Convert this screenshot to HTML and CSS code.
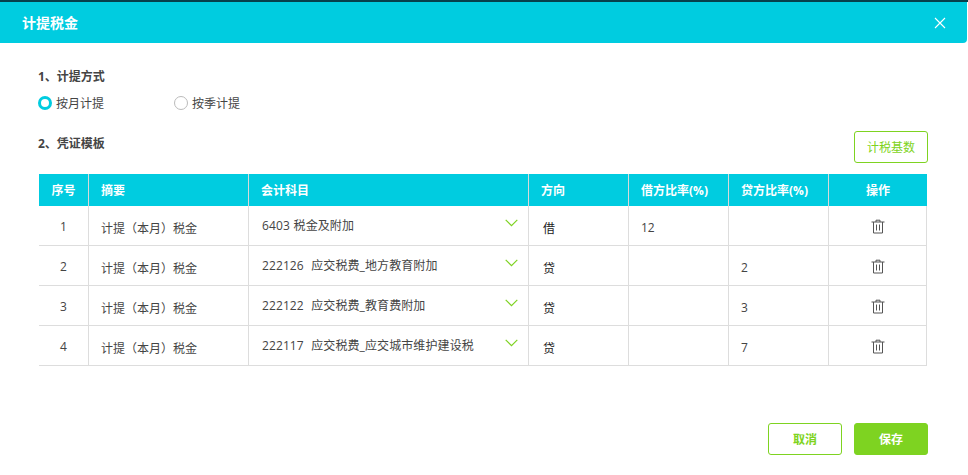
FILE: index.html
```html
<!DOCTYPE html>
<html lang="zh-CN">
<head>
<meta charset="utf-8">
<title>计提税金</title>
<link rel="stylesheet" href="styles.css">
</head>
<body>
<div class="dialog">
  <header class="head">
    <h1 class="head-title">计提税金</h1>
    <svg class="close" width="12" height="12" viewBox="0 0 12 12"><path d="M1 1l10 10M11 1L1 11" stroke="#fff" stroke-width="1.1" fill="none"/></svg>
  </header>
  <main class="body">
    <div class="sec-title">1、计提方式</div>
    <div class="radios">
      <label class="radio"><span class="dot dot-on"></span>按月计提</label>
      <label class="radio"><span class="dot"></span>按季计提</label>
    </div>
    <div class="sec-row">
      <div class="sec-title">2、凭证模板</div>
      <button class="btn btn-base">计税基数</button>
    </div>
    <table class="grid">
      <colgroup>
        <col class="c1"><col class="c2"><col class="c3"><col class="c4"><col class="c5"><col class="c6"><col class="c7">
      </colgroup>
      <thead>
        <tr><th class="ctr">序号</th><th>摘要</th><th>会计科目</th><th>方向</th><th>借方比率(%)</th><th>贷方比率(%)</th><th class="ctr">操作</th></tr>
      </thead>
      <tbody>
        <tr>
          <td class="ctr">1</td><td class="low">计提（本月）税金</td>
          <td class="acct"><span class="sel">6403 税金及附加</span><svg class="chev" width="13" height="8" viewBox="0 0 13 8"><path d="M.7.8l5.8 5.8L12.3.8" stroke="#7ed321" stroke-width="1.2" fill="none"/></svg></td>
          <td class="low dark">借</td><td class="low">12</td><td class="low"></td>
          <td class="ctr"><svg class="trash" width="14" height="15" viewBox="0 0 14 15"><path d="M.5 3h13M5 3V1.2h4V3M2.5 3v11h9V3M5.5 5.5v6M8.5 5.5v6" stroke="#555" fill="none"/></svg></td>
        </tr>
        <tr>
          <td class="ctr">2</td><td class="low">计提（本月）税金</td>
          <td class="acct"><span class="sel">222126&nbsp; 应交税费_地方教育附加</span><svg class="chev" width="13" height="8" viewBox="0 0 13 8"><path d="M.7.8l5.8 5.8L12.3.8" stroke="#7ed321" stroke-width="1.2" fill="none"/></svg></td>
          <td class="low dark">贷</td><td class="low"></td><td class="low">2</td>
          <td class="ctr"><svg class="trash" width="14" height="15" viewBox="0 0 14 15"><path d="M.5 3h13M5 3V1.2h4V3M2.5 3v11h9V3M5.5 5.5v6M8.5 5.5v6" stroke="#555" fill="none"/></svg></td>
        </tr>
        <tr>
          <td class="ctr">3</td><td class="low">计提（本月）税金</td>
          <td class="acct"><span class="sel">222122&nbsp; 应交税费_教育费附加</span><svg class="chev" width="13" height="8" viewBox="0 0 13 8"><path d="M.7.8l5.8 5.8L12.3.8" stroke="#7ed321" stroke-width="1.2" fill="none"/></svg></td>
          <td class="low dark">贷</td><td class="low"></td><td class="low">3</td>
          <td class="ctr"><svg class="trash" width="14" height="15" viewBox="0 0 14 15"><path d="M.5 3h13M5 3V1.2h4V3M2.5 3v11h9V3M5.5 5.5v6M8.5 5.5v6" stroke="#555" fill="none"/></svg></td>
        </tr>
        <tr>
          <td class="ctr">4</td><td class="low">计提（本月）税金</td>
          <td class="acct"><span class="sel">222117&nbsp; 应交税费_应交城市维护建设税</span><svg class="chev" width="13" height="8" viewBox="0 0 13 8"><path d="M.7.8l5.8 5.8L12.3.8" stroke="#7ed321" stroke-width="1.2" fill="none"/></svg></td>
          <td class="low dark">贷</td><td class="low"></td><td class="low">7</td>
          <td class="ctr"><svg class="trash" width="14" height="15" viewBox="0 0 14 15"><path d="M.5 3h13M5 3V1.2h4V3M2.5 3v11h9V3M5.5 5.5v6M8.5 5.5v6" stroke="#555" fill="none"/></svg></td>
        </tr>
      </tbody>
    </table>
    <div class="actions">
      <button class="btn btn-cancel">取消</button>
      <button class="btn btn-save">保存</button>
    </div>
  </main>
</div>
</body>
</html>
```
FILE: styles.css
```css
* { box-sizing: border-box; }
html, body { margin: 0; padding: 0; }
body {
  width: 968px;
  height: 475px;
  overflow: hidden;
  background: #fff;
  color: #444;
  font-family: "Open Sans", "Noto Sans CJK SC", sans-serif;
  font-size: 12px;
}
.dialog { height: 475px; display: flex; flex-direction: column; border-top: 2px solid #06404c; }
.head {
  height: 41px;
  flex: none;
  background: #00cce0;
  border-bottom-right-radius: 4px;
  margin-right: 1px;
  display: flex;
  align-items: center;
  justify-content: space-between;
  padding: 0 22px;
}
.head-title { margin: 0; font-size: 14px; font-weight: 700; color: #fff; line-height: 20px; }
.close { margin-right: -1px; }
.body { flex: 1; padding: 25px 40px 0 39px; display: flex; flex-direction: column; }
.sec-title { font-weight: 700; color: #444; line-height: 18px; margin-left: -1px; }
.radios { display: flex; margin-top: 8px; height: 18px; }
.radio { width: 136px; display: flex; align-items: center; color: #444; }
.dot { width: 14px; height: 14px; border: 1px solid #bbb; border-radius: 50%; margin-right: 4px; margin-left: -1px; }
.dot-on { border: 3px solid #00cce0; }
.sec-row { display: flex; justify-content: space-between; align-items: flex-start; margin-top: 19px; height: 43px; }
.sec-row .sec-title { margin-top: 4px; }
.btn {
  font-family: inherit;
  font-size: 12px;
  width: 74px;
  height: 32px;
  padding: 0;
  border: 1px solid #7ed321;
  border-radius: 3px;
  background: #fff;
  color: #7ed321;
}
.grid { width: 888px; border-collapse: separate; border-spacing: 0; table-layout: fixed; }
.c1 { width: 49px; } .c2 { width: 160px; } .c3 { width: 280px; } .c4 { width: 100px; }
.c5 { width: 100px; } .c6 { width: 100px; } .c7 { width: 99px; }
.grid th {
  height: 32px;
  padding: 0 0 0 12px;
  background: #00cce0;
  color: #fff;
  font-weight: 700;
  text-align: left;
  border-left: 1px solid #d9d9d9;
}
.grid th:first-child { border-left: 0; }
.grid th.ctr { padding: 0; text-align: center; }
.grid td {
  height: 40px;
  padding: 0 0 0 13px;
  border-left: 1px solid #ddd;
  border-bottom: 1px solid #ddd;
  color: #444;
}
.grid td:first-child { border-left: 0; }
.grid td:last-child { border-right: 1px solid #ddd; }
.grid td.ctr { padding: 2px 0 0; text-align: center; }
.grid td.low { padding-top: 4px; padding-left: 12px; }
.grid td.acct { padding: 0 0 2px 13px; }
.grid td.dark { color: #222; padding-left: 14px; }
.sel { letter-spacing: .1px; word-spacing: .5px; }
.acct { position: relative; }
.chev { position: absolute; right: 10px; top: 13px; }
.trash { display: block; margin: 0 auto; }
.actions { display: flex; justify-content: flex-end; gap: 12px; margin-top: 57px; margin-right: 0; }
.btn-save { background: #7ed321; color: #fff; font-weight: 700; }
.btn-cancel { font-weight: 700; }
```
